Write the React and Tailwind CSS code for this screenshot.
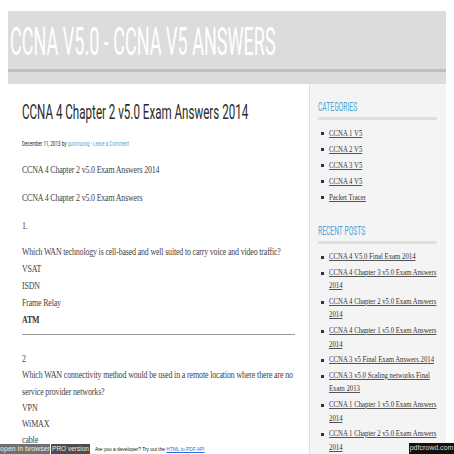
import React from "react";

const cond = { fontFamily: "Roboto, 'DejaVu Sans', sans-serif" };
const serif = { fontFamily: "'Liberation Serif', 'DejaVu Serif', serif" };
const sans = { fontFamily: "'Liberation Sans', Arial, sans-serif" };

function Cond({ children, className = "", scale = "scale-x-[0.58]" }) {
  return (
    <span className={`inline-block origin-left whitespace-nowrap ${scale} ${className}`} style={cond}>
      {children}
    </span>
  );
}

const categories = ["CCNA 1 V5", "CCNA 2 V5", "CCNA 3 V5", "CCNA 4 V5", "Packet Tracer"];
const recent = [
  ["CCNA 4 V5.0 Final Exam 2014"],
  ["CCNA 4 Chapter 3 v5.0 Exam Answers", "2014"],
  ["CCNA 4 Chapter 2 v5.0 Exam Answers", "2014"],
  ["CCNA 4 Chapter 1 v5.0 Exam Answers", "2014"],
  ["CCNA 3 v5 Final Exam Answers 2014"],
  ["CCNA 3 v5.0 Scaling networks Final", "Exam 2013"],
  ["CCNA 1 Chapter 1 v5.0 Exam Answers", "2014"],
  ["CCNA 1 Chapter 2 v5.0 Exam Answers", "2014"],
];

function SideList({ items, gap, lh }) {
  return (
    <ul className={`flex flex-col ${gap} mt-[6px]`}>
      {items.map((lines, i) => (
        <li key={i} className={`flex text-[9px] ${lh} text-[#333]`} style={serif}>
          <span className="w-[3px] h-[3px] bg-[#333] mt-[6px] mr-[5px] ml-[3px] shrink-0" />
          <span className="inline-block origin-left scale-x-[0.75] underline decoration-[#555]">
            {lines.map((l, j) => (
              <span key={j} className="block whitespace-nowrap">{l}</span>
            ))}
          </span>
        </li>
      ))}
    </ul>
  );
}

function SideHead({ children }) {
  return (
    <div>
      <div className="h-[15px] text-[12px] leading-[15px] text-[#4aa6d6]">
        <Cond scale="scale-x-[0.56]">{children}</Cond>
      </div>
      <div className="mt-[3px] h-[3px] bg-[#dedede] rounded-full" />
    </div>
  );
}

export default function App() {
  return (
    <div className="w-[454px] h-[454px] overflow-hidden bg-white relative">
      <div className="pt-[11px] px-[8px]">
        <div className="bg-[#dcdcdc] flex flex-col">
          <div className="h-[58px] pl-[2px] pt-[10px] text-[38px] leading-[38px] text-white">
            <Cond scale="scale-x-[0.475]">CCNA V5.0 - CCNA V5 ANSWERS</Cond>
          </div>
          <div className="h-[3px] bg-[#c0c0c0]" />
          <div className="h-[12px]" />
        </div>
        <div className="flex h-[400px]">
          <div className="w-[301px] pl-[14px] pt-[16px]">
            <div className="h-[24px] text-[20px] leading-[24px] text-[#2b2b2b]">
              <Cond scale="scale-x-[0.58]">CCNA 4 Chapter 2 v5.0 Exam Answers 2014</Cond>
            </div>
            <div className="mt-[14px] h-[10px] text-[8px] leading-[10px] text-[#222]">
              <Cond scale="scale-x-[0.56]">
                December 11, 2013 by <span className="text-[#4aa6d6]">quocvuong</span>
                <span className="text-[#4aa6d6]"> - Leave a Comment</span>
              </Cond>
            </div>
            <div className="origin-left scale-x-[0.79] text-[10px] leading-[17px] text-[#444] tracking-[-0.02em]" style={serif}>
              <p className="mt-[13px] whitespace-nowrap">CCNA 4 Chapter 2 v5.0 Exam Answers 2014</p>
              <p className="mt-[11px] whitespace-nowrap">CCNA 4 Chapter 2 v5.0 Exam Answers</p>
              <p className="mt-[11px]">1.</p>
              <div className="mt-[9px]">
                <p className="whitespace-nowrap">Which WAN technology is cell-based and well suited to carry voice and video traffic?</p>
                <p>VSAT</p>
                <p>ISDN</p>
                <p>Frame Relay</p>
                <p className="font-bold text-[#333]">ATM</p>
              </div>
            </div>
            <div className="mt-[6px] h-px bg-[#999] w-[273px]" />
            <div className="origin-left scale-x-[0.8] text-[10px] leading-[16.3px] text-[#444] tracking-[-0.02em]" style={serif}>
              <p className="mt-[16px]">2</p>
              <div>
                <p className="whitespace-nowrap">Which WAN connectivity method would be used in a remote location where there are no</p>
                <p>service provider networks?</p>
                <p>VPN</p>
                <p>WiMAX</p>
                <p>cable</p>
              </div>
            </div>
          </div>
          <div className="w-[137px] bg-[#f4f4f4] border-l border-[#e0e0e0] pl-[8px] pr-[9px] pt-[15px]">
            <SideHead>CATEGORIES</SideHead>
            <SideList items={categories.map((c) => [c])} gap="gap-[2px]" lh="leading-[14px]" />
            <div className="mt-[19px]">
              <SideHead>RECENT POSTS</SideHead>
              <SideList items={recent} gap="gap-[2.2px]" lh="leading-[13.5px]" />
            </div>
          </div>
        </div>
      </div>
      <div className="absolute left-0 bottom-0 w-[454px] h-[11px] flex items-end" style={sans}>
        <div className="h-[10px] w-[50px] flex items-center justify-center bg-[#707070] text-[7px] leading-[10px] text-[#ececec] whitespace-nowrap overflow-hidden">
          open in browser
        </div>
        <div className="h-[10px] w-[39px] ml-px flex items-center justify-center bg-[#4d4d4d] text-[6.5px] leading-[10px] text-[#ececec] whitespace-nowrap overflow-hidden">
          PRO version
        </div>
        <div className="h-[10px] flex items-center ml-[5px] text-[6.2px] leading-[10px] text-[#111]">
          <span className="inline-block origin-left scale-x-[0.78] whitespace-nowrap">
            Are you a developer? Try out the <span className="text-[#2a6fd6] underline">HTML to PDF API</span>
          </span>
        </div>
        <div className="ml-auto h-[11px] w-[45px] bg-[#111] flex items-center justify-center text-[7px] text-[#ddd] whitespace-nowrap overflow-hidden">
          pdfcrowd.com
        </div>
      </div>
    </div>
  );
}
